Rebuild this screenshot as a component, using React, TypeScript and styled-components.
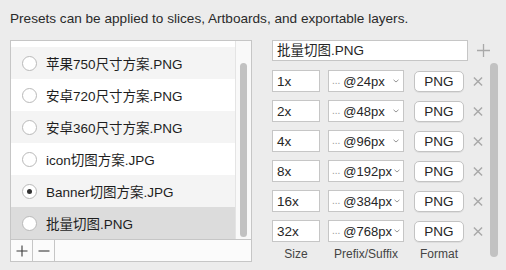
import styled, { createGlobalStyle } from "styled-components";

const GlobalStyle = createGlobalStyle`
  body {
    margin: 0;
    background: #ececec;
    font-family: "Liberation Sans", "Noto Sans CJK SC", sans-serif;
    color: #262626;
  }
`;

const presets = [
  { name: "苹果750尺寸方案.PNG" },
  { name: "安卓720尺寸方案.PNG" },
  { name: "安卓360尺寸方案.PNG" },
  { name: "icon切图方案.JPG" },
  { name: "Banner切图方案.JPG", checked: true },
  { name: "批量切图.PNG", selected: true },
];

const sizes = [
  { size: "1x", suffix: "@24px" },
  { size: "2x", suffix: "@48px" },
  { size: "4x", suffix: "@96px" },
  { size: "8x", suffix: "@192px" },
  { size: "16x", suffix: "@384px" },
  { size: "32x", suffix: "@768px" },
];

export default function App() {
  return (
    <>
      <GlobalStyle />
      <Page>
        <Caption>Presets can be applied to slices, Artboards, and exportable layers.</Caption>
        <Columns>
          <ListBox>
            <ListBody>
              <Viewport>
                {presets.map((item, index) => (
                  <PresetRow key={item.name} $odd={index % 2 === 0} $selected={!!item.selected}>
                    <Radio $checked={!!item.checked} />
                    <span>{item.name}</span>
                  </PresetRow>
                ))}
              </Viewport>
              <Track>
                <Thumb />
              </Track>
            </ListBody>
            <Footer>
              <FooterButton>
                <svg width="12" height="12" viewBox="0 0 12 12">
                  <path d="M6 0.5v11M0.5 6h11" stroke="#3a3a3a" strokeWidth="1.1" />
                </svg>
              </FooterButton>
              <FooterButton>
                <svg width="12" height="12" viewBox="0 0 12 12">
                  <path d="M0.5 6h11" stroke="#3a3a3a" strokeWidth="1.1" />
                </svg>
              </FooterButton>
            </Footer>
          </ListBox>

          <Editor>
            <NameRow>
              <NameField>批量切图.PNG</NameField>
              <IconSlot $width={14}>
                <svg width="13" height="13" viewBox="0 0 13 13">
                  <path d="M6.5 0v13M0 6.5h13" stroke="#a9a9a9" strokeWidth="1.3" />
                </svg>
              </IconSlot>
            </NameRow>
            <EditorBody>
              <Grid>
                {sizes.map((row) => (
                  <SizeRow key={row.size}>
                    <Field>{row.size}</Field>
                    <Select>
                      <Dots>...</Dots>
                      <Suffix>{row.suffix}</Suffix>
                      <svg width="6" height="4" viewBox="0 0 6 4">
                        <path d="M0.5 0.8L3 3L5.5 0.8" stroke="#8a8a8a" strokeWidth="0.9" fill="none" />
                      </svg>
                    </Select>
                    <FormatButton>PNG</FormatButton>
                    <IconSlot $width={10}>
                      <svg width="11" height="11" viewBox="0 0 11 11">
                        <path d="M1 1l9 9M10 1l-9 9" stroke="#a9a9a9" strokeWidth="1.6" />
                      </svg>
                    </IconSlot>
                  </SizeRow>
                ))}
                <LabelRow>
                  <Label $width={48}>Size</Label>
                  <Label $width={76}>Prefix/Suffix</Label>
                  <Label $width={50}>Format</Label>
                </LabelRow>
              </Grid>
              <SideThumb />
            </EditorBody>
          </Editor>
        </Columns>
      </Page>
    </>
  );
}

const Page = styled.div`
  width: 506px;
  height: 270px;
  box-sizing: border-box;
  padding: 11px 0 0 10px;
`;

const Caption = styled.div`
  font-size: 13.6px;
  line-height: 16px;
  color: #2a2a2a;
`;

const Columns = styled.div`
  display: flex;
  gap: 20px;
  margin-top: 13px;
`;

const ListBox = styled.div`
  width: 242px;
  height: 222px;
  box-sizing: border-box;
  border: 1px solid #c6c6c6;
  background: #fff;
  display: flex;
  flex-direction: column;
`;

const ListBody = styled.div`
  flex: 1;
  display: flex;
  min-height: 0;
`;

const Viewport = styled.div`
  flex: 1;
  overflow: hidden;
  padding-top: 6px;
  background: #fff;
`;

const PresetRow = styled.div<{ $odd: boolean; $selected: boolean }>`
  height: 32px;
  display: flex;
  align-items: center;
  gap: 9px;
  padding-left: 11px;
  font-size: 13.5px;
  color: #1e1e1e;
  background: ${(p) => (p.$selected ? "#dcdcdc" : p.$odd ? "#f4f4f4" : "#fff")};
`;

const Radio = styled.span<{ $checked: boolean }>`
  width: 15px;
  height: 15px;
  box-sizing: border-box;
  border-radius: 50%;
  border: 1px solid #b9b9b9;
  background: #fff;
  display: flex;
  align-items: center;
  justify-content: center;

  &::after {
    content: "";
    width: 5px;
    height: 5px;
    border-radius: 50%;
    background: #333;
    display: ${(p) => (p.$checked ? "block" : "none")};
  }
`;

const Track = styled.div`
  width: 15px;
  background: #f9f9f9;
  border-left: 1px solid #e4e4e4;
  padding-top: 22px;
  padding-bottom: 2px;
  display: flex;
  justify-content: center;
`;

const Thumb = styled.div`
  width: 7px;
  height: 174px;
  border-radius: 4px;
  background: #c2c2c2;
`;

const Footer = styled.div`
  height: 21px;
  border-top: 1px solid #c6c6c6;
  display: flex;
  background: #fbfbfb;
`;

const FooterButton = styled.div`
  width: 21px;
  border-right: 1px solid #c6c6c6;
  display: flex;
  align-items: center;
  justify-content: center;
`;

const Editor = styled.div`
  display: flex;
  flex-direction: column;
  gap: 2px;
`;

const NameRow = styled.div`
  display: flex;
  align-items: center;
  gap: 8px;
`;

const NameField = styled.div`
  width: 196px;
  height: 21px;
  box-sizing: border-box;
  border: 1px solid #c6c6c6;
  background: #fff;
  font-size: 13.5px;
  line-height: 19px;
  padding-left: 4px;
`;

const IconSlot = styled.div<{ $width: number }>`
  width: ${(p) => p.$width}px;
  display: flex;
  align-items: center;
  justify-content: center;
`;

const EditorBody = styled.div`
  display: flex;
  gap: 7px;
`;

const Grid = styled.div`
  display: flex;
  flex-direction: column;
  gap: 8px;
  padding-top: 7px;
`;

const SizeRow = styled.div`
  display: flex;
  align-items: center;
  height: 22px;
  gap: 8px;

  & > :nth-child(3) {
    margin-left: 2px;
  }
  & > :nth-child(4) {
    margin-left: 1px;
  }
`;

const LabelRow = styled.div`
  display: flex;
  gap: 8px;
  height: 14px;
  margin-top: -3px;

  & > :nth-child(3) {
    margin-left: 2px;
  }
`;

const Field = styled.div`
  width: 48px;
  height: 22px;
  box-sizing: border-box;
  border: 1px solid #c6c6c6;
  background: #fff;
  font-size: 13.5px;
  line-height: 21px;
  padding-left: 4px;
`;

const Select = styled.div`
  width: 76px;
  height: 22px;
  box-sizing: border-box;
  border: 1px solid #c6c6c6;
  background: #fff;
  display: flex;
  align-items: center;
  padding: 0 4px 0 3px;
  gap: 2px;

  svg {
    flex-shrink: 0;
    margin-left: auto;
  }
`;

const Dots = styled.span`
  font-size: 10px;
  color: #9a9a9a;
  align-self: flex-end;
  padding-bottom: 5px;
  margin-right: 1px;
`;

const Suffix = styled.span`
  font-size: 13px;
  white-space: nowrap;
`;

const FormatButton = styled.div`
  width: 50px;
  height: 21px;
  box-sizing: border-box;
  border: 1px solid #c3c3c3;
  border-radius: 5px;
  background: #fff;
  font-size: 13.5px;
  display: flex;
  align-items: center;
  justify-content: center;
  box-shadow: 0 1px 0 rgba(0, 0, 0, 0.06);
`;

const Label = styled.div<{ $width: number }>`
  width: ${(p) => p.$width}px;
  text-align: center;
  font-size: 12px;
  line-height: 14px;
  color: #444;
  white-space: nowrap;
`;

const SideThumb = styled.div`
  width: 8px;
  height: 194px;
  border-radius: 4px;
  background: #c2c2c2;
`;
